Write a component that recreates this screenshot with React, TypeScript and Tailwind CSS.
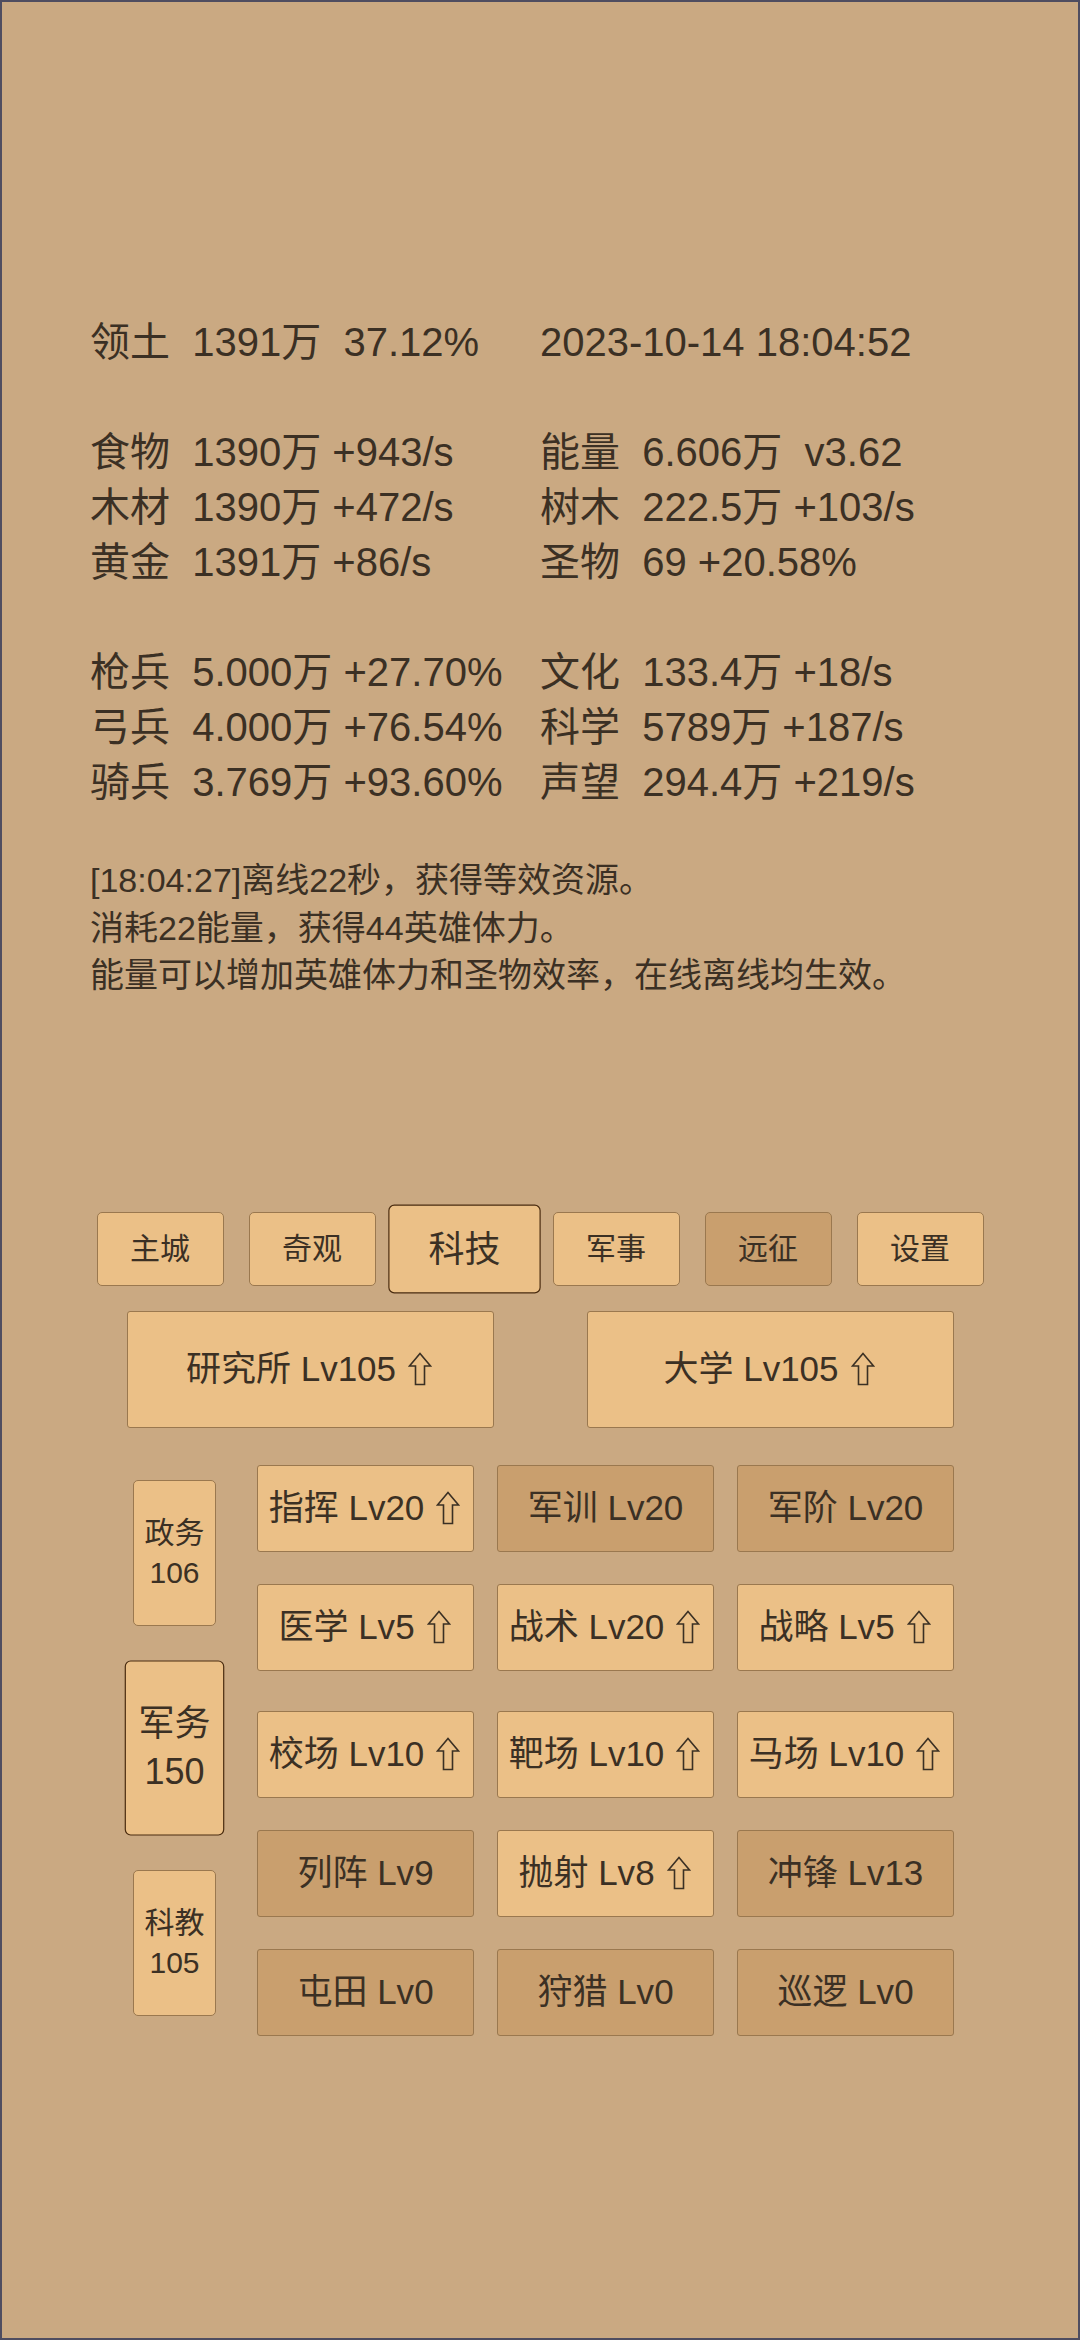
import React from 'react';

const statRows: [string, string][] = [
  ['领土  1391万  37.12%', '2023-10-14 18:04:52'],
  ['', ''],
  ['食物  1390万 +943/s', '能量  6.606万  v3.62'],
  ['木材  1390万 +472/s', '树木  222.5万 +103/s'],
  ['黄金  1391万 +86/s', '圣物  69 +20.58%'],
  ['', ''],
  ['枪兵  5.000万 +27.70%', '文化  133.4万 +18/s'],
  ['弓兵  4.000万 +76.54%', '科学  5789万 +187/s'],
  ['骑兵  3.769万 +93.60%', '声望  294.4万 +219/s'],
];

const logLines = [
  '[18:04:27]离线22秒，获得等效资源。',
  '消耗22能量，获得44英雄体力。',
  '能量可以增加英雄体力和圣物效率，在线离线均生效。',
];

const tabs = [
  { label: '主城' },
  { label: '奇观' },
  { label: '科技', active: true },
  { label: '军事' },
  { label: '远征', dim: true },
  { label: '设置' },
];

type Tech = { name: string; lv: number; up: boolean };

const techRows: Tech[][] = [
  [
    { name: '指挥', lv: 20, up: true },
    { name: '军训', lv: 20, up: false },
    { name: '军阶', lv: 20, up: false },
  ],
  [
    { name: '医学', lv: 5, up: true },
    { name: '战术', lv: 20, up: true },
    { name: '战略', lv: 5, up: true },
  ],
  [
    { name: '校场', lv: 10, up: true },
    { name: '靶场', lv: 10, up: true },
    { name: '马场', lv: 10, up: true },
  ],
  [
    { name: '列阵', lv: 9, up: false },
    { name: '抛射', lv: 8, up: true },
    { name: '冲锋', lv: 13, up: false },
  ],
  [
    { name: '屯田', lv: 0, up: false },
    { name: '狩猎', lv: 0, up: false },
    { name: '巡逻', lv: 0, up: false },
  ],
];

// spacing between tech rows is not uniform in the screenshot
const rowMargins = ['', 'mt-[32px]', 'mt-[40px]', 'mt-[32px]', 'mt-[32px]'];

const branches = [
  { name: '政务', n: 106 },
  { name: '军务', n: 150, active: true },
  { name: '科教', n: 105 },
];

// outlined "upgrade available" arrow
function Arrow() {
  return (
    <svg viewBox="0 0 24 34" className="w-[24px] h-[34px] ml-[12px] mr-[2px] shrink-0" fill="none">
      <path
        d="M12 1.5 L22.5 14 L16.5 14 L16.5 32.5 L7.5 32.5 L7.5 14 L1.5 14 Z"
        stroke="#3b3024"
        strokeWidth="1.6"
        strokeLinejoin="miter"
      />
    </svg>
  );
}

export default function App() {
  return (
    <div className="w-[1080px] h-[2340px] border-2 border-[#4f4d60] bg-[#caa982] text-[#3b3024] font-['Liberation_Sans','Noto_Sans_CJK_SC','DejaVu_Sans',sans-serif] overflow-hidden">
      {/* resource stats */}
      <div className="pt-[313px] pl-[88px]">
        <div className="grid grid-cols-[450px_1fr] text-[40px] leading-[55px] whitespace-pre">
          {statRows.map(([l, r], i) => (
            <React.Fragment key={i}>
              <div className="h-[55px]">{l}</div>
              <div className="h-[55px]">{r}</div>
            </React.Fragment>
          ))}
        </div>

        {/* log */}
        <div className="mt-[47px] text-[34px] leading-[47.5px]">
          {logLines.map((t) => (
            <div key={t}>{t}</div>
          ))}
        </div>
      </div>

      {/* tabs */}
      <div className="mt-[212px] flex justify-center gap-[25px]">
        {tabs.map((t) => (
          <div
            key={t.label}
            className={`w-[127px] h-[74px] rounded-[5px] flex items-center justify-center text-[30px] ${
              t.active
                ? 'scale-[1.2] border-[1.5px] border-[#4a2c10] bg-[#ebc087]'
                : t.dim
                ? 'border border-[#9a784f] bg-[#c99f6e]'
                : 'border border-[#9a784f] bg-[#ebc087]'
            }`}
          >
            {t.label}
          </div>
        ))}
      </div>

      {/* buildings */}
      <div className="mt-[25px] flex justify-center gap-[93px]">
        {['研究所 Lv105', '大学 Lv105'].map((b) => (
          <div
            key={b}
            className="w-[367px] h-[117px] rounded-[3px] border border-[#9a784f] bg-[#ebc087] flex items-center justify-center text-[35px] whitespace-pre"
          >
            {b}
            <Arrow />
          </div>
        ))}
      </div>

      {/* tech tree */}
      <div className="mt-[37px] ml-[131px] flex gap-[41px]">
        <div className="w-[83px] pt-[15px] flex flex-col gap-[49px]">
          {branches.map((b) => (
            <div
              key={b.name}
              className={`h-[146px] rounded-[5px] flex flex-col items-center justify-center text-[30px] leading-[40px] bg-[#ebc087] ${
                b.active ? 'scale-[1.2] border-[1.5px] border-[#4a2c10]' : 'border border-[#9a784f]'
              }`}
            >
              <div>{b.name}</div>
              <div>{b.n}</div>
            </div>
          ))}
        </div>

        <div className="flex flex-col">
          {techRows.map((row, i) => (
            <div key={i} className={`grid grid-cols-[217px_217px_217px] gap-[23px] ${rowMargins[i]}`}>
              {row.map((t) => (
                <div
                  key={t.name}
                  className={`h-[87px] rounded-[3px] border border-[#9a784f] flex items-center justify-center text-[35px] whitespace-pre ${
                    t.up ? 'bg-[#ebc087]' : 'bg-[#c99f6e]'
                  }`}
                >
                  {t.name} Lv{t.lv}
                  {t.up && <Arrow />}
                </div>
              ))}
            </div>
          ))}
        </div>
      </div>
    </div>
  );
}
